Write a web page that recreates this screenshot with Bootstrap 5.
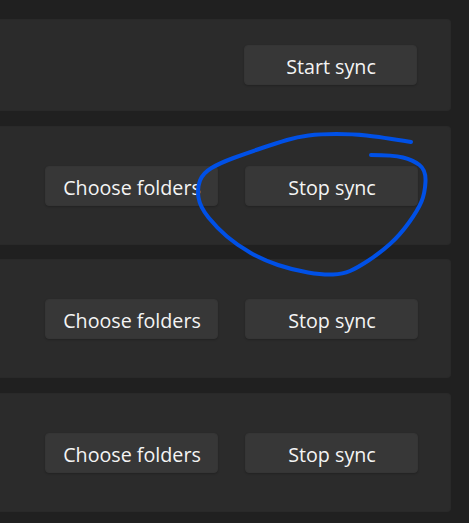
<!doctype html>
<html lang="en">
<head>
<meta charset="utf-8">
<title>Sync</title>
<link href="https://cdn.jsdelivr.net/npm/bootstrap@5.3.0/dist/css/bootstrap.min.css" rel="stylesheet">
<style>
html, body { height: 100%; }
body { background: #202020; overflow: hidden; font-family: "Open Sans", "Noto Sans", sans-serif; }
.sync-list { padding: 19px 18px 0 0; gap: 14px; }
.sync-card { background: #2b2b2b; border: 1px solid #292929; border-left: 0; border-radius: 0 4px 4px 0; padding-right: 32px; }
.sync-short { height: 92px; margin-bottom: 1px; padding-right: 33px; }
.sync-tall { height: 119px; }
.sync-last { margin-top: 1px; }
.sync-btn { width: 173px; height: 40px; padding: 3px 0 0 1px; background: #373737; border: 1px solid #353535; border-radius: 4px; color: #f4f4f4; font-size: 19.7px; line-height: 35px; box-shadow: 0 1px 2px rgba(0,0,0,.2); }
.sync-btn:hover { background: #373737; color: #f4f4f4; border-color: #353535; }
.sync-gap { gap: 27px; }
.scribble { position: absolute; left: 0; top: 0; pointer-events: none; }
</style>
</head>
<body class="position-relative">
<main class="sync-list d-flex flex-column">
  <section class="sync-card sync-short d-flex align-items-center justify-content-end">
    <button type="button" class="btn sync-btn">Start sync</button>
  </section>
  <section class="sync-card sync-tall d-flex align-items-center justify-content-end sync-gap">
    <button type="button" class="btn sync-btn">Choose folders</button>
    <button type="button" class="btn sync-btn">Stop sync</button>
  </section>
  <section class="sync-card sync-tall d-flex align-items-center justify-content-end sync-gap">
    <button type="button" class="btn sync-btn">Choose folders</button>
    <button type="button" class="btn sync-btn">Stop sync</button>
  </section>
  <section class="sync-card sync-tall sync-last d-flex align-items-center justify-content-end sync-gap">
    <button type="button" class="btn sync-btn">Choose folders</button>
    <button type="button" class="btn sync-btn">Stop sync</button>
  </section>
</main>
<svg class="scribble" width="469" height="523" viewBox="0 0 469 523" fill="none" aria-hidden="true">
  <path d="M411 142 Q380 137 366.5 135.5 Q353 134 336.5 134 Q320 134 308.5 135.5 Q297 137 287 140 Q277 143 262 148 Q247 153 233.5 158 Q220 163 211.5 168 Q203 173 200 180.5 Q197 188 198.5 197.5 Q200 207 208.5 217.5 Q217 228 227 236.5 Q237 245 250 252.5 Q263 260 278 265 Q293 270 308 272.5 Q323 275 333 274.5 Q343 274 350 271 Q357 268 368.5 260.5 Q380 253 390 244 Q400 235 409 222.5 Q418 210 421.5 201.5 Q425 193 425.5 181.5 Q426 170 419.5 165 Q413 160 403 157.5 Q393 155 371 155" stroke="#0050e6" stroke-width="4" stroke-linecap="round" stroke-linejoin="round"/>
</svg>
<script src="https://cdn.jsdelivr.net/npm/bootstrap@5.3.0/dist/js/bootstrap.bundle.min.js"></script>
</body>
</html>
